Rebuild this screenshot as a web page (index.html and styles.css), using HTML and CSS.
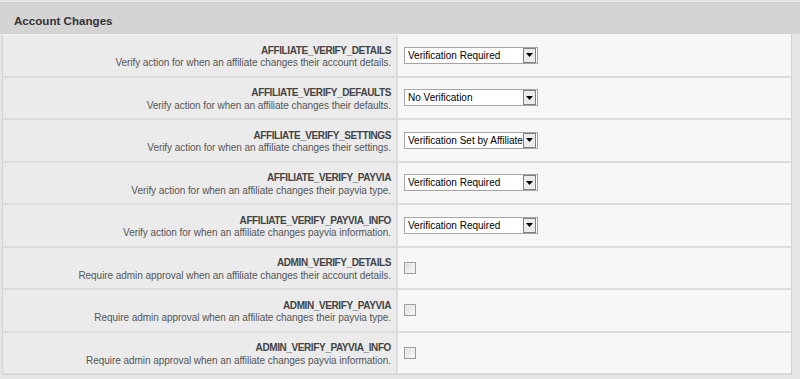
FILE: index.html
```html
<!DOCTYPE html>
<html>
<head>
  <title>Account Changes</title>
  <link rel="stylesheet" href="styles.css">
</head>
<body>
  <div class="header">
    <h2>Account Changes</h2>
  </div>
  <div class="panel">
    <table class="settings">
      <tr>
        <td class="label">
          <strong>AFFILIATE_VERIFY_DETAILS</strong>
          <span>Verify action for when an affiliate changes their account details.</span>
        </td>
        <td class="value">
          <div class="select"><span class="select-text">Verification Required</span><span class="select-arrow"><svg width="7" height="4" viewBox="0 0 7 4"><path d="M0 0h7L3.5 4z" fill="#000"/></svg></span></div>
        </td>
      </tr>
      <tr>
        <td class="label">
          <strong>AFFILIATE_VERIFY_DEFAULTS</strong>
          <span>Verify action for when an affiliate changes their defaults.</span>
        </td>
        <td class="value">
          <div class="select"><span class="select-text">No Verification</span><span class="select-arrow"><svg width="7" height="4" viewBox="0 0 7 4"><path d="M0 0h7L3.5 4z" fill="#000"/></svg></span></div>
        </td>
      </tr>
      <tr>
        <td class="label">
          <strong>AFFILIATE_VERIFY_SETTINGS</strong>
          <span>Verify action for when an affiliate changes their settings.</span>
        </td>
        <td class="value">
          <div class="select"><span class="select-text">Verification Set by Affiliate</span><span class="select-arrow"><svg width="7" height="4" viewBox="0 0 7 4"><path d="M0 0h7L3.5 4z" fill="#000"/></svg></span></div>
        </td>
      </tr>
      <tr>
        <td class="label">
          <strong>AFFILIATE_VERIFY_PAYVIA</strong>
          <span>Verify action for when an affiliate changes their payvia type.</span>
        </td>
        <td class="value">
          <div class="select"><span class="select-text">Verification Required</span><span class="select-arrow"><svg width="7" height="4" viewBox="0 0 7 4"><path d="M0 0h7L3.5 4z" fill="#000"/></svg></span></div>
        </td>
      </tr>
      <tr>
        <td class="label">
          <strong>AFFILIATE_VERIFY_PAYVIA_INFO</strong>
          <span>Verify action for when an affiliate changes payvia information.</span>
        </td>
        <td class="value">
          <div class="select"><span class="select-text">Verification Required</span><span class="select-arrow"><svg width="7" height="4" viewBox="0 0 7 4"><path d="M0 0h7L3.5 4z" fill="#000"/></svg></span></div>
        </td>
      </tr>
      <tr>
        <td class="label">
          <strong>ADMIN_VERIFY_DETAILS</strong>
          <span>Require admin approval when an affiliate changes their account details.</span>
        </td>
        <td class="value"><span class="checkbox"></span></td>
      </tr>
      <tr>
        <td class="label">
          <strong>ADMIN_VERIFY_PAYVIA</strong>
          <span>Require admin approval when an affiliate changes their payvia type.</span>
        </td>
        <td class="value"><span class="checkbox"></span></td>
      </tr>
      <tr>
        <td class="label">
          <strong>ADMIN_VERIFY_PAYVIA_INFO</strong>
          <span>Require admin approval when an affiliate changes payvia information.</span>
        </td>
        <td class="value"><span class="checkbox"></span></td>
      </tr>
    </table>
  </div>
</body>
</html>
```

FILE: styles.css
```css
/* Account settings page */
body {
  margin: 0;
  background-color: #e6e6e6;
  font-family: "Liberation Sans", Arial, sans-serif;
  font-size: 10px;
  color: #555;
}

.header {
  height: 33px;
  background-color: #d4d4d4;
  border-top: 1px solid #e2e2e2;
  box-shadow: inset 0 1px 0 #ececec;
  display: flex;
  align-items: center;
}

.header h2 {
  margin: 0 0 0 14px;
  font-size: 11.6px;
  font-weight: bold;
  color: #333;
  padding-top: 5px;
}

.panel {
  margin-left: 2px;
  width: 788px;
  border-left: 1px solid #d3d3d3;
  border-right: 1px solid #d3d3d3;
  border-top: 1px solid #f4f4f4;
  border-bottom: 1px solid #d3d3d3;
}

.settings {
  width: 100%;
  border-collapse: collapse;
}

.settings td {
  height: 40.5px;
  padding: 0;
  border-bottom: 2px solid #dcdcdc;
}

.settings tr:last-child td {
  border-bottom: 1px solid #dcdcdc;
}

.settings .label {
  width: 388px;
  height: 36.5px;
  background-color: #ebebeb;
  text-align: right;
  padding: 4px 5px 0 0;
  border-right: 2px solid #dcdcdc;
  line-height: 12.5px;
}

.label strong {
  display: block;
  color: #444;
  font-weight: bold;
  font-size: 10px;
  letter-spacing: -0.4px;
}

.label span {
  display: block;
  letter-spacing: -0.05px;
}

.value {
  background-color: #f7f7f7;
}

.settings .value {
  padding-left: 6px;
}

.select {
  display: flex;
  align-items: center;
  width: 132px;
  height: 15px;
  border: 1px solid #a5a5a5;
  background-color: #fff;
  overflow: hidden;
  color: #000;
  font-size: 10px;
}

.select-text {
  flex: 1;
  padding-left: 3px;
  white-space: nowrap;
  overflow: hidden;
}

.select-arrow {
  width: 11px;
  height: 13px;
  margin-right: 1px;
  border: 1px solid #808080;
  background-color: #ececec;
  display: flex;
  align-items: center;
  justify-content: center;
  flex-shrink: 0;
}

.checkbox {
  display: block;
  width: 10px;
  height: 10px;
  border: 1px solid #9c9c9c;
  background: linear-gradient(135deg, #dcdcdc, #fbfbfb);
  box-shadow: inset 0 0 0 1px #f0f0f0;
}
```
